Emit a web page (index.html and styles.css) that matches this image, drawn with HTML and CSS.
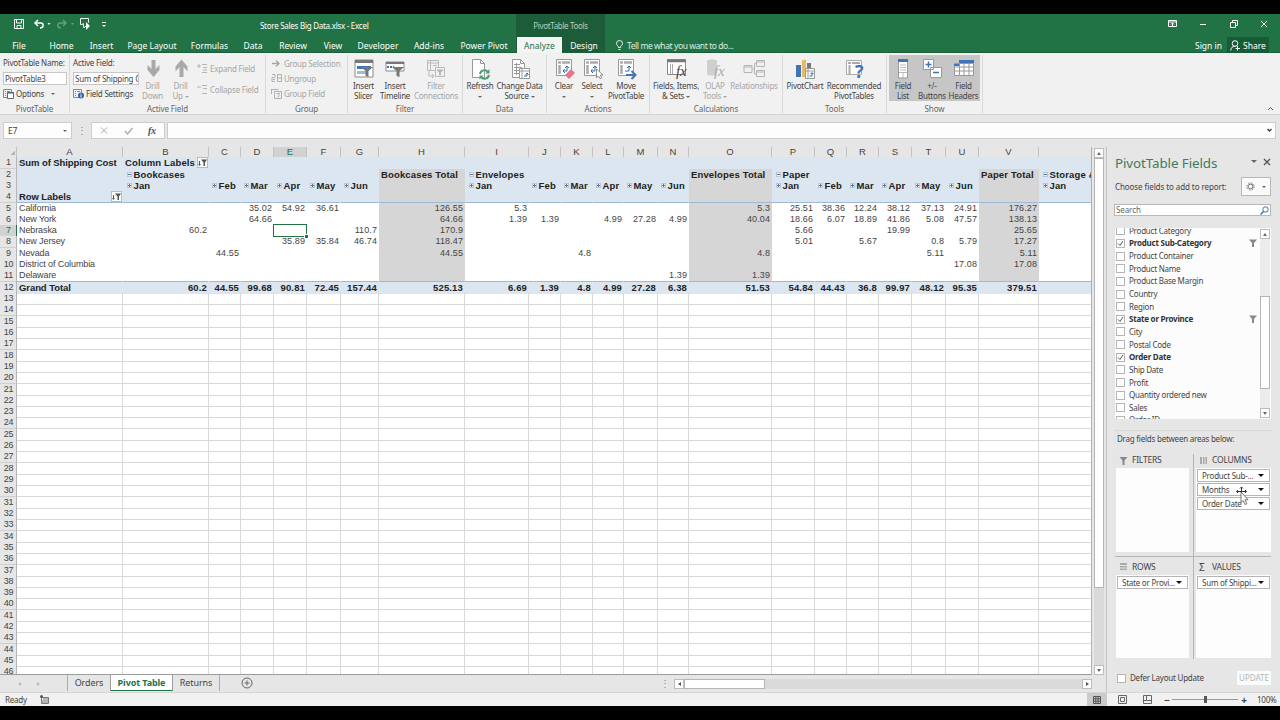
FILE: index.html
```html
<!DOCTYPE html>
<html lang="en">
<head>
    <meta charset="UTF-8">
    <meta name="viewport" content="width=device-width, initial-scale=1.0">
    <title>Store Sales Big Data.xlsx - Excel</title>
    <link rel="stylesheet" href="styles.css">
</head>
<body>
    <div class="window">
        <div class="top">
            <div class="titlebar">
                <div class="quick">
                    <svg width="70" height="14" viewBox="0 0 70 14" fill="none" stroke="#fff">
                        <path d="M4.500 2.500h9v9h-9zM6.500 2.500v3.500h5v-3.500M7 11.500v-3h4v3"/>
                        <path d="M25 6h6c3 0 3 5-1 5M28 3l-3 3 3 3" stroke-width="1.500"/>
                        <path d="M37.500 6h3l-1.500 2z" fill="#fff" stroke="none"/>
                        <g opacity=".3"><path d="M56 6h-6c-3 0-3 5 1 5M53 3l3 3-3 3" stroke-width="1.500"/><path d="M61 6h3l-1.500 2z" fill="#fff" stroke="none"/></g>
                    </svg>
                    <svg width="40" height="14" viewBox="0 0 40 14" fill="none" stroke="#fff">
                        <path d="M2.500 7.500h-2v-6h8v4"/><path d="M3 6l1 5 2-2"/><path d="M6 5l4 4-4 4z" fill="#fff" stroke="none"/>
                        <path d="M22 5.500h4"/><path d="M22 8h4l-2 2z" fill="#fff" stroke="none"/>
                    </svg>
                </div>
                <div class="doc-title">Store Sales Big Data.xlsx - Excel</div>
                <div class="context-title">PivotTable Tools</div>
                <div class="win-buttons">
                    <svg width="110" height="12" viewBox="0 0 110 12" fill="none" stroke="#fff">
                        <path d="M1.500 2.500h8v6h-8zM1.500 4h8M5.500 8v-3M4 6.500l1.500-1.500 1.500 1.500"/>
                        <path d="M33 6.500h6"/>
                        <path d="M63.500 4.500h5v5h-5zM65.500 4v-1.500h5v5h-2"/>
                        <path d="M94 3l6 6M100 3l-6 6"/>
                    </svg>
                </div>
            </div>
            <div class="tabs">
                <span class="tab file">File</span>
                <span class="tab home">Home</span>
                <span class="tab insert">Insert</span>
                <span class="tab page">Page Layout</span>
                <span class="tab formulas">Formulas</span>
                <span class="tab data">Data</span>
                <span class="tab review">Review</span>
                <span class="tab view">View</span>
                <span class="tab developer">Developer</span>
                <span class="tab addins">Add-ins</span>
                <span class="tab power">Power Pivot</span>
                <span class="tab analyze active">Analyze</span>
                <span class="tab design">Design</span>
                <span class="tell">
                    <svg width="7" height="11" viewBox="0 0 7 11" fill="none" stroke="#fff" stroke-width=".9"><path d="M2.500 7.500c0-2-2-2-2-4a3 3 0 0 1 6 0c0 2-2 2-2 4zM2.500 9.500h2"/></svg>
                    <span>Tell me what you want to do...</span>
                </span>
                <span class="signin">Sign in</span>
                <span class="share">
                    <svg width="11" height="11" viewBox="0 0 11 11" fill="none" stroke="#fff"><circle cx="5" cy="3.500" r="2.800"/><path d="M.8 10.500c0-3 2-4.200 4-4.200M7.500 6v4.500M5.500 8.500h4.500"/></svg>
                    <span>Share</span>
                </span>
            </div>
        </div>

        <div class="ribbon">
            <div class="group g-pivot">
                <div class="tools stack">
                    <span class="line">PivotTable Name:</span>
                    <span class="input">PivotTable3</span>
                    <span class="line">
                        <svg class="small-icon" viewBox="0 0 11 11" fill="none" stroke="#888"><path d="M.5 1.500h8v8h-8zM2 3.500h1M4 3.500h3M2 5.500h1M2 7.500h1"/><path d="M4.500 4.500h6v6h-6z" fill="#fff" stroke="#666"/><path d="M4.500 5h6" stroke="#2b67a5"/></svg>
                        Options <i class="caret"></i>
                    </span>
                </div>
                <div class="caption">PivotTable</div>
            </div>
            <div class="group g-field">
                <div class="tools">
                    <div class="stack field-stack">
                        <span class="line">Active Field:</span>
                        <span class="input">Sum of Shipping C</span>
                        <span class="line">
                            <svg class="small-icon" viewBox="0 0 11 11" fill="none" stroke="#888"><path d="M.5 1.500h8v8h-8zM2 3.500h1M4 3.500h3M2 5.500h1M2 7.500h1"/><circle cx="8" cy="7.500" r="3" fill="#2b67a5" stroke="none"/><path d="M8 5.500v1M8 7v2.500" stroke="#fff"/></svg>
                            Field Settings
                        </span>
                    </div>
                    <div class="big down off"><svg viewBox="0 0 20 20"><path d="M8.500 1h4v9l4-4v5l-6 7-6-7V6l4 4z" fill="#a9a9a9"/></svg><span>Drill</span><span>Down</span></div>
                    <div class="big up off"><svg viewBox="0 0 20 20"><path d="M8.500 18h4V8l4 4.500V7.500l-6-7-6 7v5l4-4.500z" fill="#a9a9a9"/></svg><span>Drill</span><span>Up <i class="caret"></i></span></div>
                    <div class="stack expand off">
                        <span class="line"><svg class="small-icon" viewBox="0 0 11 11" fill="none" stroke="#b5b5b5"><path d="M0 3h4M2 1v4M5 1.500h5M6 4.500h4M5 9.500h5M6 7h4"/></svg>Expand Field</span>
                        <span class="line"><svg class="small-icon" viewBox="0 0 11 11" fill="none" stroke="#b5b5b5"><path d="M0 3h4M5 1.500h5M6 4.500h4M5 9.500h5"/></svg>Collapse Field</span>
                    </div>
                </div>
                <div class="caption">Active Field</div>
            </div>
            <div class="group g-group">
                <div class="tools stack off">
                    <span class="line"><svg class="small-icon" viewBox="0 0 11 11" fill="none" stroke="#a5a5a5" stroke-width="1.300"><path d="M1 5.500h7M5 2.500l3 3-3 3"/></svg>Group Selection</span>
                    <span class="line"><svg class="small-icon" viewBox="0 0 11 11" fill="none" stroke="#b0b0b0"><path d="M1 1.500h3v3h-3v4h3M6.500 1.500h4v7h-4zM6.500 5h4M2 6.500h2"/></svg>Ungroup</span>
                    <span class="line"><svg class="small-icon" viewBox="0 0 11 11" fill="none" stroke="#b0b0b0"><path d="M.5 1.500h7M.5 1v5M3.500 3.500h7v7h-7zM5.500 5.500h3l-1.500 4"/></svg>Group Field</span>
                </div>
                <div class="caption">Group</div>
            </div>
            <div class="group g-filter">
                <div class="tools">
                    <div class="big slicer"><svg viewBox="0 0 20 20"><path d="M1 1h18v17H1z" fill="#fff" stroke="#8b8b8b"/><path d="M1 1h18v3H1z" fill="#787878"/><path d="M3 7h14v3H3z" fill="#3f74b6"/><path d="M3 12h9v3H3z" fill="#9eb9d9"/><path d="M7 8h12l-4.500 4v6l-3-1v-5z" fill="#777"/></svg><span>Insert</span><span>Slicer</span></div>
                    <div class="big timeline"><svg viewBox="0 0 20 20"><path d="M1 3h18v9H1z" fill="#fff" stroke="#8b8b8b"/><path d="M1 3h18v2H1z" fill="#787878"/><path d="M2 8h7" stroke="#3f74b6" stroke-width="2" stroke-dasharray="2 1"/><path d="M7 8h12l-4.500 4v6l-3-1v-5z" fill="#777"/></svg><span>Insert</span><span>Timeline</span></div>
                    <div class="big connections off"><svg viewBox="0 0 20 20" fill="none" stroke="#b9b9b9"><path d="M1.500 1.500h11v10h-11zM1.500 4h11M4.500 2v9M7 6.500h4"/><path d="M3 12v5h5M6 15l2 2-2 2"/><path d="M9.500 8.500h9v9h-9z" fill="#f1f1f1"/><path d="M11 11h6l-2.500 2v3h-1v-3z" fill="#aaa"/></svg><span>Filter</span><span>Connections</span></div>
                </div>
                <div class="caption">Filter</div>
            </div>
            <div class="group g-data">
                <div class="tools">
                    <div class="big refresh"><svg viewBox="0 0 20 20" fill="none"><path d="M2.500.5h8l4 4v14h-12z" fill="#fff" stroke="#999"/><path d="M10.500.5v4h4" stroke="#999"/><path d="M10 15a4.500 4.500 0 0 1 8-2M19 16a4.500 4.500 0 0 1-8 2" stroke="#4f9a75" stroke-width="2"/><path d="M19.500 10v4.500h-4zM9.500 20.500v-4h4z" fill="#4f9a75"/></svg><span>Refresh</span><span><i class="caret"></i></span></div>
                    <div class="big source"><svg viewBox="0 0 20 20" fill="none" stroke="#999"><path d="M2.500.5h8l4 4v14h-12z" fill="#fff"/><path d="M10.500.5v4h4M4 5.500h6M4 8.500h8M4 11.500h6M4 14.500h5M6.500 4v12"/><path d="M9.500 9.500h10v10h-10z" fill="#fff"/><path d="M9.500 12h10M12 9.500v10"/><path d="M14 17h3v-3M15.500 15.500l1.500-1.500 1.500 1.500" stroke="#2f6cb3"/></svg><span>Change Data</span><span>Source <i class="caret"></i></span></div>
                </div>
                <div class="caption">Data</div>
            </div>
            <div class="group g-actions">
                <div class="tools">
                    <div class="big clear"><svg viewBox="0 0 20 20" fill="none" stroke="#999"><path d="M2.500.5h15v16h-15z" fill="#fff"/><path d="M4 3.500h3M8 3.500h8M5.500 6v9" stroke="#aaa" stroke-width="2.500"/><path d="M9 12h4V7M11 9l2-2 2 2M10.500 10L9 12l2 2" stroke="#2f6cb3"/><path d="M17 10l4 4-6 6-4-4z" fill="#e57589" stroke="none"/></svg><span>Clear</span><span><i class="caret"></i></span></div>
                    <div class="big select"><svg viewBox="0 0 20 20" fill="none" stroke="#999"><path d="M2.500.5h15v16h-15z" fill="#fff"/><path d="M4 3.500h3M8 3.500h8M5.500 6v9" stroke="#aaa" stroke-width="2.500"/><path d="M9 12h4V7M11 9l2-2 2 2M10.500 10L9 12l2 2" stroke="#2f6cb3"/><path d="M14.500 10v9l2-2 2 3 1-1-1-3h2.500z" fill="#fff" stroke="#777" stroke-width=".8"/></svg><span>Select</span><span><i class="caret"></i></span></div>
                    <div class="big move"><svg viewBox="0 0 20 20" fill="none" stroke="#999"><path d="M2.500.5h15v16h-15z" fill="#fff"/><path d="M4 3.500h3M8 3.500h8M5.500 6v9" stroke="#aaa" stroke-width="2.500"/><path d="M9 12h4V7M11 9l2-2 2 2" stroke="#2f6cb3"/><path d="M10 16h9M15.500 12l4 4-4 4" stroke="#3f74b6" stroke-width="2"/></svg><span>Move</span><span>PivotTable</span></div>
                </div>
                <div class="caption">Actions</div>
            </div>
            <div class="group g-calc">
                <div class="tools">
                    <div class="big fields"><svg viewBox="0 0 20 20"><path d="M1.500.5h18v15h-18z" fill="#fff" stroke="#888"/><path d="M1 2h19" stroke="#777" stroke-width="2.500"/><path d="M4.500 5v10M6.500 5v10" stroke="#aaa"/><text x="10" y="17" class="fx">fx</text></svg><span>Fields, Items,</span><span>&amp; Sets <i class="caret"></i></span></div>
                    <div class="big olap off"><svg viewBox="0 0 20 20"><path d="M2 2c0-2 10-2 10 0v13c0 2-10 2-10 0z" fill="#cfcfcf"/><text x="9" y="17" class="fx">fx</text></svg><span>OLAP</span><span>Tools <i class="caret"></i></span></div>
                    <div class="big relations off"><svg viewBox="0 0 20 20" fill="none" stroke="#b5b5b5"><path d="M0 6.500h8v7H0zM12.500 1.500h8v6h-8zM12.500 11.500h8v6h-8zM8 10h2.500V4.500H12M10.500 10v5H12M0 8h8M12 3h8M12 13h8"/></svg><span>Relationships</span></div>
                </div>
                <div class="caption">Calculations</div>
            </div>
            <div class="group g-tools">
                <div class="tools">
                    <div class="big chart"><svg viewBox="0 0 20 20"><path d="M1 6h5v12H1z" fill="#3f74b6"/><path d="M7 1h4v17H7z" fill="#e9b862"/><path d="M12 4h4v6h-4z" fill="#777"/><path d="M10.500 9.500h9v10h-9zM10.500 12h9M13 9.500v10" fill="#fff" stroke="#999"/><path d="M14.500 17h2.500v-3M15.500 15l1.500-1.500 1.500 1.500" fill="none" stroke="#2f6cb3"/></svg><span>PivotChart</span></div>
                    <div class="big recommended"><svg viewBox="0 0 20 20"><path d="M2.500 1.500h15v14h-15z" fill="#fff" stroke="#aaa"/><path d="M4 4h3M8 4h8M5.500 6v9" stroke="#aaa" stroke-width="2"/><text x="11" y="19" class="question">?</text></svg><span>Recommended</span><span>PivotTables</span></div>
                </div>
                <div class="caption">Tools</div>
            </div>
            <div class="group g-show">
                <div class="tools">
                    <div class="big list on"><svg viewBox="0 0 20 20"><path d="M5.500 1h9v18h-9z" fill="#fff" stroke="#999"/><path d="M5 0h10v3H5z" fill="#3f74b6"/><path d="M7 6h6M7 8.500h6M7 11h6M6 13.500h8M10 14v5" stroke="#bbb"/></svg><span>Field</span><span>List</span></div>
                    <div class="big buttons on"><svg viewBox="0 0 20 20"><path d="M1.500.5h10v10h-10zM8.500 8.500h11v10h-11z" fill="#fff" stroke="#999"/><path d="M3.500 5.500h6M6.500 2.500v6M11 13.500h6" stroke="#3f74b6" stroke-width="1.500"/></svg><span>+/-</span><span>Buttons</span></div>
                    <div class="big headers on"><svg viewBox="0 0 20 20"><path d="M.5 4.500h19v12H.5z" fill="#fff"/><path d="M.5 4.500h19v12H.5zM.5 8h19M.5 12h19M5.500 4v12M10 4v12M15 4v12" fill="none" stroke="#999"/><path d="M5 1h15v3H5zM0 5h5v2H0z" fill="#3f74b6"/></svg><span>Field</span><span>Headers</span></div>
                </div>
                <div class="caption">Show</div>
            </div>
            <svg class="collapse" width="7" height="5" viewBox="0 0 7 5" fill="none" stroke="#555"><path d="M1 4l2.500-2.500L6 4"/></svg>
        </div>

        <div class="formula-bar">
            <div class="name-box">E7 <i class="caret"></i></div>
            <span class="dots">⋮</span>
            <div class="fx-box">
                <svg width="73" height="15" viewBox="0 0 73 15" fill="none" stroke="#aaa"><path d="M9 4.500l6 6M15 4.500l-6 6"/><path d="M33 8l2.500 3 5-6" stroke-width="1.300"/><text x="56" y="11" class="fx-small">fx</text></svg>
            </div>
            <div class="formula-input"><svg width="7" height="5" viewBox="0 0 7 5" fill="none" stroke="#444" stroke-width="1.500"><path d="M1.500 1l2 2 2-2"/></svg></div>
        </div>

        <div class="workspace">
            <div class="book">
                <div class="sheet-area">
                    <div class="sheet" id="sheet"></div>
                    <div class="vscroll">
                        <span class="arrow"><i class="tri tri-up"></i></span>
                        <span class="thumb"></span>
                        <span class="arrow end"><i class="tri tri-down"></i></span>
                    </div>
                </div>
                <div class="sheet-tabs">
                    <span class="nav"><i class="tri tri-left"></i><i class="tri tri-right"></i></span>
                    <span class="sheet-tab orders">Orders</span>
                    <span class="sheet-tab pivot">Pivot Table</span>
                    <span class="sheet-tab returns">Returns</span>
                    <svg class="add" width="12" height="12" viewBox="0 0 12 12" fill="none" stroke="#666"><circle cx="6" cy="6" r="5"/><path d="M6 3.500v5M3.500 6h5"/></svg>
                    <span class="dots split">⋮</span>
                    <div class="hscroll">
                        <span class="arrow"><i class="tri tri-left"></i></span>
                        <span class="thumb"></span>
                        <span class="arrow end"><i class="tri tri-right"></i></span>
                    </div>
                </div>
            </div>

            <div class="pane">
                <div class="pane-head">
                    <h2>PivotTable Fields</h2>
                    <i class="caret"></i>
                    <svg width="8" height="8" viewBox="0 0 8 8" stroke="#555" stroke-width="1.400"><path d="M1 1l6 6M7 1L1 7"/></svg>
                </div>
                <div class="choose">
                    <span>Choose fields to add to report:</span>
                    <span class="gear"><svg width="9" height="9" viewBox="0 0 9 9" fill="none" stroke="#888"><circle cx="4.500" cy="4.500" r="2.400" stroke-width="1.200"/><circle cx="4.500" cy="4.500" r="3.700" stroke-dasharray="1.500 1.400"/></svg><i class="caret"></i></span>
                </div>
                <div class="search">
                    <span>Search</span>
                    <svg width="9" height="9" viewBox="0 0 9 9" fill="none" stroke="#3b6ea5"><circle cx="5.500" cy="3.500" r="2.700"/><path d="M3.500 5.500l-3 3" stroke-width="1.500"/></svg>
                </div>
                <div class="fields-box">
                    <div class="field-list" id="fields"></div>
                    <div class="list-scroll">
                        <span class="arrow"><i class="tri tri-up"></i></span>
                        <span class="thumb"></span>
                        <span class="arrow end"><i class="tri tri-down"></i></span>
                    </div>
                </div>
                <div class="drag-text">Drag fields between areas below:</div>
                <div class="areas">
                    <div class="area">
                        <div class="area-title"><svg width="9" height="9" viewBox="0 0 9 9"><path d="M.5 1h8l-3 3.500V9h-2V4.500z" fill="#888"/></svg>FILTERS</div>
                        <div class="drop"></div>
                    </div>
                    <div class="area right">
                        <div class="area-title"><svg width="9" height="9" viewBox="0 0 9 9"><path d="M1 1h2v7H1zM4 1h1.500v7H4zM6.500 1H8v7H6.500z" fill="#aaa"/></svg>COLUMNS</div>
                        <div class="drop">
                            <span class="chip">Product Sub-...<i class="caret"></i></span>
                            <span class="chip">Months<i class="caret"></i></span>
                            <span class="chip">Order Date<i class="caret"></i></span>
                            <svg class="cursor" width="16" height="20" viewBox="0 0 16 20"><path d="M6.500 1v10M1.500 5.500h10M5 2.500L6.500 1 8 2.500M3 4L1.500 5.500 3 7M10 4l1.500 1.500L10 7" fill="none" stroke="#333"/><path d="M6 6v10.500l2.300-2 1.700 4 1.800-.8-1.700-3.900h3z" fill="#fff" stroke="#555" stroke-width=".8"/></svg>
                        </div>
                    </div>
                    <div class="area lower">
                        <div class="area-title"><svg width="9" height="9" viewBox="0 0 9 9"><path d="M1 1h7v2H1zM1 4h7v1.500H1zM1 6.500h7V8H1z" fill="#aaa"/></svg>ROWS</div>
                        <div class="drop"><span class="chip">State or Provi...<i class="caret"></i></span></div>
                    </div>
                    <div class="area right lower">
                        <div class="area-title"><span class="sigma">Σ</span>VALUES</div>
                        <div class="drop"><span class="chip">Sum of Shippi...<i class="caret"></i></span></div>
                    </div>
                </div>
                <div class="defer">
                    <i class="check"></i><span>Defer Layout Update</span><span class="update">UPDATE</span>
                </div>
            </div>
        </div>

        <div class="status">
            <span>Ready</span>
            <svg class="macro" width="9" height="9" viewBox="0 0 9 9" fill="none" stroke="#777"><path d="M1.500 2.500h7v6h-7zM3 5v3M5 5v3M7 5v3M3 4h5"/><circle cx="1.500" cy="1.500" r="1.500" fill="#555" stroke="none"/></svg>
            <div class="views">
                <span class="view-btn current"><svg width="9" height="9" viewBox="0 0 9 9" fill="none" stroke="#555"><path d="M1.500 1.500h7v7h-7zM1.500 3.800h7M1.500 6.200h7M3.800 1.500v7M6.200 1.500v7"/></svg></span>
                <span class="view-btn"><svg width="9" height="9" viewBox="0 0 9 9" fill="none" stroke="#666"><path d="M.5.5h8v8h-8zM2.500 2.500h4v4h-4z"/></svg></span>
                <span class="view-btn"><svg width="9" height="9" viewBox="0 0 9 9" fill="none" stroke="#666"><path d="M.5.5h8v8h-8zM3.500.5v5h5M.5 5.500h3"/></svg></span>
                <span class="zoom-sign">−</span>
                <span class="slider"><i></i></span>
                <span class="zoom-sign">+</span>
                <span class="percent">100%</span>
            </div>
        </div>
    </div>

    <script src="script.js"></script>
</body>
</html>
```
FILE: script.js
```js
const columns = 'ABCDEFGHIJKLMNOPQRSTUV'.split('').concat('');
const rowCount = 46;
const totals = ['H', 'O', 'V'];

// "+" and "-" in front of a label draw the expand / collapse button
const cells = {
    A1: 'Sum of Shipping Cost', B1: 'Column Labels',
    B2: '-Bookcases', H2: 'Bookcases Total', I2: '-Envelopes', O2: 'Envelopes Total', P2: '-Paper', V2: 'Paper Total', W2: '-Storage & Organization',
    B3: '+Jan', C3: '+Feb', D3: '+Mar', E3: '+Apr', F3: '+May', G3: '+Jun',
    I3: '+Jan', J3: '+Feb', K3: '+Mar', L3: '+Apr', M3: '+May', N3: '+Jun',
    P3: '+Jan', Q3: '+Feb', R3: '+Mar', S3: '+Apr', T3: '+May', U3: '+Jun', W3: '+Jan',
    A4: 'Row Labels',
    A5: 'California', D5: 35.02, E5: 54.92, F5: 36.61, H5: 126.55, I5: 5.3, O5: 5.3,
    P5: 25.51, Q5: 38.36, R5: 12.24, S5: 38.12, T5: 37.13, U5: 24.91, V5: 176.27,
    A6: 'New York', D6: 64.66, H6: 64.66, I6: 1.39, J6: 1.39, L6: 4.99, M6: 27.28, N6: 4.99, O6: 40.04,
    P6: 18.66, Q6: 6.07, R6: 18.89, S6: 41.86, T6: 5.08, U6: 47.57, V6: 138.13,
    A7: 'Nebraska', B7: 60.2, G7: 110.7, H7: 170.9, P7: 5.66, S7: 19.99, V7: 25.65,
    A8: 'New Jersey', E8: 35.89, F8: 35.84, G8: 46.74, H8: 118.47, P8: 5.01, R8: 5.67, T8: 0.8, U8: 5.79, V8: 17.27,
    A9: 'Nevada', C9: 44.55, H9: 44.55, K9: 4.8, O9: 4.8, T9: 5.11, V9: 5.11,
    A10: 'District of Columbia', U10: 17.08, V10: 17.08,
    A11: 'Delaware', N11: 1.39, O11: 1.39,
    A12: 'Grand Total', B12: 60.2, C12: 44.55, D12: 99.68, E12: 90.81, F12: 72.45, G12: 157.44, H12: 525.13,
    I12: 6.69, J12: 1.39, K12: 4.8, L12: 4.99, M12: 27.28, N12: 6.38, O12: 51.53,
    P12: 54.84, Q12: 44.43, R12: 36.8, S12: 99.97, T12: 48.12, U12: 95.35, V12: 379.51
};

const sheet = document.getElementById('sheet');

function add(parent, className, text) {
    const el = document.createElement('div');
    el.className = className;
    if (text !== undefined) el.textContent = text;
    parent.appendChild(el);
    return el;
}

const head = add(sheet, 'row head');
add(head, 'corner');
columns.forEach(c => add(head, c === 'E' ? 'col current' : 'col', c));

for (let r = 1; r <= rowCount; r++) {
    let rowClass = 'row';
    if (r <= 4 || r === 12) rowClass += ' blue';
    if (r <= 12) rowClass += ' plain';
    if (r === 4) rowClass += ' last-head';
    if (r === 11) rowClass += ' last-body';
    const row = add(sheet, rowClass);
    add(row, r === 7 ? 'num current' : 'num', r);

    columns.forEach(c => {
        const value = cells[(c || 'W') + r];
        const cell = add(row, c === 'A' ? 'cell first' : 'cell');
        if (totals.includes(c) && r > 1 && r < 12) cell.classList.add('total');
        if (c === 'E' && r === 7) cell.classList.add('selected');
        if (typeof value === 'number') cell.classList.add('number');
        if (value === undefined) return;
        const label = String(value);
        if (label[0] === '+' || label[0] === '-') {
            const toggle = document.createElement('i');
            toggle.className = label[0] === '+' ? 'toggle plus' : 'toggle';
            cell.appendChild(toggle);
            cell.classList.add(c === 'B' || c === 'I' || c === 'P' || c === '' ? 'outer' : 'month');
            cell.append(label.slice(1));
        } else {
            cell.append(label);
        }
        if (label === 'Column Labels' || label === 'Row Labels') {
            const button = add(cell, 'filter-btn');
            button.innerHTML = '<svg width="9" height="9" viewBox="0 0 9 9"><path d="M3 1.500h6L7 4.500V8H5.500V4.500zM1 3h1v3h1L1.500 8 0 6h1z" fill="#555"/></svg>';
        }
    });
}

const fields = [
    'Product Category', '*Product Sub-Category', 'Product Container', 'Product Name', 'Product Base Margin',
    'Country', 'Region', '*State or Province', 'City', 'Postal Code', '*Order Date', 'Ship Date',
    'Profit', 'Quantity ordered new', 'Sales', 'Order ID'
];
const list = document.getElementById('fields');
const tick = '<svg width="7" height="7" viewBox="0 0 7 7" fill="none" stroke="#555"><path d="M1 3.500l2 2L6 1"/></svg>';
const funnel = '<svg class="funnel" width="8" height="8" viewBox="0 0 8 8"><path d="M0 .5h8L5 4v4H3V4z" fill="#888"/></svg>';

fields.forEach(name => {
    const used = name[0] === '*';
    const row = add(list, used ? 'field used' : 'field');
    const box = add(row, 'check');
    if (used) box.innerHTML = tick;
    row.append(name.replace('*', ''));
    if (used && name !== '*Order Date') row.insertAdjacentHTML('beforeend', funnel);
});
```
FILE: styles.css
```css
* {
    box-sizing: border-box;
}

body {
    margin: 0;
    background: #000;
    font-family: "Noto Sans", "Open Sans", sans-serif;
    font-size: 8px;
    line-height: 10px;
    letter-spacing: -0.23px;
    color: #444;
}

svg {
    flex: none;
}

.window {
    width: 1280px;
    height: 720px;
    padding: 14px 0;
    display: flex;
    flex-direction: column;
    overflow: hidden;
    white-space: nowrap;
}

.caret {
    display: inline-block;
    border: 2px solid transparent;
    border-top: 2.5px solid #666;
    border-bottom: 0;
    vertical-align: middle;
}

/* Title bar and tabs */
.top {
    height: 39px;
    background: linear-gradient(90deg, transparent 516px, #1c5c38 516px, #1c5c38 605px, transparent 605px) #217346;
    color: #fff;
    border-bottom: 1px solid #1b5e39;
}

.titlebar {
    height: 23px;
    display: flex;
}

.quick {
    width: 240px;
    display: flex;
    padding: 3px 0 0 10px;
}

.doc-title {
    width: 150px;
    padding-left: 20px;
    line-height: 24px;
    letter-spacing: -0.27px;
}

.context-title {
    margin-left: 126px;
    width: 89px;
    text-align: center;
    line-height: 24px;
    letter-spacing: -0.35px;
    color: #b5d0c0;
}

.win-buttons {
    margin-left: auto;
    width: 113px;
    padding-top: 4px;
}

.tabs {
    height: 16px;
    display: flex;
    line-height: 17px;
    font-size: 8.5px;
    letter-spacing: 0;
}

.tab {
    display: flex;
    justify-content: center;
    flex: none;
}

.file { width: 38px; }
.home { width: 47px; }
.insert { width: 33px; }
.page { width: 68px; }
.formulas { width: 47px; }
.data, .review, .view { width: 40px; }
.developer { width: 50px; }
.addins { width: 52px; }
.power { width: 58px; }
.analyze { width: 45px; margin-left: 4px; }
.design { width: 44px; }

.tab.active {
    background: #f4f4f4;
    color: #217346;
}

.tell {
    display: flex;
    align-items: center;
    gap: 4px;
    margin-left: 10px;
    letter-spacing: -0.42px;
    color: #dcebe2;
}

.signin {
    margin-left: auto;
    margin-right: 5px;
}

.share {
    width: 42px;
    margin-right: 11px;
    display: flex;
    align-items: center;
    justify-content: center;
    gap: 2px;
    background: #185c37;
}

/* Ribbon */
.ribbon {
    height: 62px;
    display: flex;
    background: #f1f1f1;
    border-bottom: 1px solid #d2d2d2;
}

.group {
    flex: none;
    display: flex;
    flex-direction: column;
    border-right: 1px solid #dadada;
    margin: 2px 0;
    height: 58px;
}

.g-pivot { width: 70px; }
.g-field { width: 196px; }
.g-group { width: 82px; }
.g-filter { width: 115px; }
.g-data { width: 84px; }
.g-actions { width: 103px; }
.g-calc { width: 133px; }
.g-tools { width: 104px; }
.g-show { width: 96px; }

.tools {
    height: 46px;
    display: flex;
}

.caption {
    text-align: center;
    line-height: 16px;
    letter-spacing: -0.1px;
    color: #666;
}

.stack {
    display: flex;
    flex-direction: column;
    padding: 1px 0 0 3px;
}

.line {
    height: 15px;
    display: flex;
    align-items: center;
}

.small-icon {
    width: 11px;
    height: 11px;
    margin-right: 2px;
}

.line .caret {
    margin-left: 7px;
}

.input {
    width: 64px;
    height: 14px;
    margin: 1px 0;
    padding-left: 1px;
    background: #fff;
    border: 1px solid #c6c6c6;
    line-height: 12px;
    overflow: hidden;
}

.field-stack {
    width: 68px;
}

.field-stack .input {
    width: 66px;
}

.off {
    color: #a6a6a6;
}

.expand {
    padding-top: 6px;
    gap: 6px;
}

.g-group .tools {
    padding-left: 5px;
}

.big {
    flex: none;
    display: flex;
    flex-direction: column;
    align-items: center;
    padding-top: 4px;
}

.big svg {
    width: 20px;
    height: 20px;
    overflow: visible;
    margin-bottom: 2px;
}

.big span {
    height: 10.5px;
    line-height: 10px;
}

.big.off .caret {
    border-top-color: #a6a6a6;
}

.fx {
    font: italic 15px "Liberation Serif", serif;
    fill: #444;
    stroke: none;
}

.off .fx {
    fill: #aaa;
}

.question {
    font: bold 18px "Open Sans", sans-serif;
    fill: #3f74b6;
}

.down { width: 29px; }
.up { width: 27px; }
.slicer { width: 31px; }
.timeline { width: 32px; }
.connections { width: 50px; }
.refresh { width: 34px; }
.source { width: 45px; }
.clear { width: 28px; margin-left: 3px; }
.select { width: 28px; }
.move { width: 40px; }
.fields { width: 42px; margin-left: 5px; }
.olap { width: 36px; }
.relations { width: 42px; }
.chart { width: 40px; margin-left: 2px; }
.recommended { width: 58px; }
.list { width: 28px; margin-left: 2px; }
.buttons { width: 30px; }
.headers { width: 33px; }

.big.on {
    background: #c6c6c6;
}

.collapse {
    margin: auto 6px 3px auto;
}

/* Formula bar */
.formula-bar {
    height: 32px;
    padding: 7px 4px 0 3px;
    display: flex;
    background: #e6e6e6;
}

.name-box, .fx-box, .formula-input {
    height: 17px;
    background: #fdfdfd;
    border: 1px solid #cdcdcd;
}

.name-box {
    width: 69px;
    padding: 0 4px;
    display: flex;
    justify-content: space-between;
    align-items: center;
    font-size: 8.5px;
}

.dots {
    width: 19px;
    text-align: center;
    line-height: 17px;
    color: #888;
    font-size: 10px;
}

.fx-box {
    width: 74px;
    margin-right: 2px;
}

.fx-small {
    font: italic bold 10px "Liberation Serif", serif;
    fill: #555;
    stroke: none;
}

.formula-input {
    flex: 1;
    display: flex;
    align-items: center;
    justify-content: flex-end;
    padding-right: 2px;
}

/* Sheet */
.workspace {
    height: 545px;
    display: flex;
    background: #e6e6e6;
}

.book {
    width: 1106px;
    display: flex;
    flex-direction: column;
}

.sheet-area {
    height: 528px;
    display: flex;
}

.sheet {
    width: 1092px;
    height: 528px;
    overflow: hidden;
    border-right: 1px solid #b0b0b0;
    border-bottom: 1px solid #9c9c9c;
    background: #fff;
    font-family: "Liberation Sans", Arial, sans-serif;
    font-size: 9px;
    letter-spacing: 0.1px;
}

.row {
    display: grid;
    grid-template-columns: 17px 106px 86px 32px 33px 33px 34px 38px 86px 64px 32px 32px 31px 34px 31px 83px 43px 32px 32px 33px 34px 33px 60px 53px;
    height: 11.32px;
    line-height: 11px;
}

.head {
    height: 10.3px;
    background: #e6e6e6;
    font-size: 9.5px;
    line-height: 10px;
}

.col, .corner {
    text-align: center;
    border-right: 1px solid #c3c3c3;
    border-bottom: 1px solid #b0b8c4;
}

.corner {
    background: linear-gradient(135deg, transparent 50%, #b4b4b4 50%) 10px 3px / 5px 5px no-repeat;
}

.col.current {
    background: #d2d2d2;
    color: #217346;
    border-bottom: 1px solid #217346;
}

.num {
    background: #e6e6e6;
    border-right: 1px solid #b5b5b5;
    border-bottom: 1px solid #cfcfcf;
    padding-left: 1px;
    text-align: center;
    font-size: 9px;
    letter-spacing: -0.2px;
}

.num.current {
    background: #d2d2d2;
    color: #217346;
    border-right: 1px solid #217346;
}

.cell {
    position: relative;
    border-right: 1px solid #d8d8d8;
    border-bottom: 1px solid #d8d8d8;
    padding-left: 2px;
    min-width: 0;
}

.first {
    letter-spacing: -0.1px;
}

.plain .cell {
    border-color: transparent;
}

.blue .cell {
    background: #dce6f1;
    font-weight: bold;
    font-size: 9.5px;
    color: #222;
    letter-spacing: 0.15px;
}

.blue .first {
    letter-spacing: -0.08px;
}

.blue .total, .plain .total {
    background: #d6d6d6;
}

.last-head .cell, .last-body .cell {
    border-bottom-color: #9fb8d8;
}

.number {
    text-align: right;
    padding: 0 1px 0 0;
}

.row .selected {
    border: 1.5px solid #217346;
    margin: -1px 0 0 -1px;
    z-index: 1;
}

.selected::after {
    content: "";
    position: absolute;
    right: -2px;
    bottom: -2px;
    width: 3px;
    height: 3px;
    background: #217346;
    border: 1px solid #fff;
    box-sizing: content-box;
    border-right: 0;
    border-bottom: 0;
}

.outer {
    padding-left: 4px;
}

.month {
    padding-left: 3px;
}

.toggle {
    display: inline-block;
    width: 5px;
    height: 5px;
    margin-right: 1.5px;
    vertical-align: 1px;
    border: 1px solid #b9c6da;
    background: linear-gradient(#5b7497, #5b7497) center / 3px 1px no-repeat, #eef3fa;
}

.toggle.plus {
    background: linear-gradient(#5b7497, #5b7497) center / 3px 1px no-repeat, linear-gradient(#5b7497, #5b7497) center / 1px 3px no-repeat, #eef3fa;
}

.filter-btn {
    position: absolute;
    right: 0;
    top: 0;
    width: 11px;
    height: 11px;
    display: flex;
    align-items: center;
    justify-content: center;
    background: #fbfbfb;
    border: 1px solid #b5bcc8;
}

/* Scroll bars */
.vscroll, .list-scroll {
    display: flex;
    flex-direction: column;
    background: #dadada;
}

.vscroll {
    width: 10px;
    margin: 1px 0 0 2px;
}

.arrow {
    flex: none;
    width: 10px;
    height: 10px;
    display: flex;
    align-items: center;
    justify-content: center;
    background: #fff;
    border: 1px solid #bdbdbd;
}

.end {
    margin-top: auto;
}

.thumb {
    background: #fff;
    border: 1px solid #b5b5b5;
}

.vscroll .thumb {
    height: 430px;
}

.tri {
    border: 2px solid transparent;
}

.tri-up { border-bottom: 3px solid #666; border-top: 0; }
.tri-down { border-top: 3px solid #666; border-bottom: 0; }
.tri-left { border-right: 3px solid #555; border-left: 0; }
.tri-right { border-left: 3px solid #555; border-right: 0; }

/* Sheet tabs */
.sheet-tabs {
    height: 17px;
    display: flex;
    line-height: 16px;
    font-size: 9px;
    letter-spacing: -0.1px;
}

.nav {
    width: 67px;
    padding-left: 18px;
    display: flex;
    align-items: center;
    gap: 16px;
    opacity: .3;
}

.sheet-tab {
    display: flex;
    justify-content: center;
    height: 16px;
}

.orders {
    width: 43px;
    border-left: 1px solid #aaa;
}

.pivot {
    width: 63px;
    background: #fff;
    color: #217346;
    font-weight: bold;
    border: 1px solid #9c9c9c;
    border-top: 0;
    border-bottom: 1.5px solid #217346;
}

.returns {
    width: 47px;
    border-right: 1px solid #aaa;
}

.add {
    margin: 2px 0 0 21px;
}

.split {
    margin-left: 402px;
}

.hscroll {
    width: 418px;
    height: 10px;
    margin-top: 4px;
    display: flex;
    background: #dadada;
}

.hscroll .thumb {
    width: 81px;
}

.hscroll .end {
    margin: 0 0 0 auto;
}

/* Fields pane */
.pane {
    width: 174px;
    border-left: 1px solid #c3c3c3;
    padding: 8px 9px 0 8px;
}

.pane-head {
    display: flex;
    align-items: center;
    height: 17px;
}

.pane h2 {
    margin: 0 auto 0 0;
    font-size: 13.4px;
    font-weight: normal;
    line-height: 17px;
    letter-spacing: -0.1px;
    color: #3c7d5c;
}

.pane-head svg {
    margin: -4px 0 0 6px;
}

.pane-head .caret {
    margin-top: -4px;
    border-width: 3px 3px 0;
}

.choose {
    display: flex;
    justify-content: space-between;
    align-items: center;
    height: 19px;
    margin-top: 5px;
    letter-spacing: -0.08px;
}

.gear {
    width: 30px;
    height: 19px;
    display: flex;
    align-items: center;
    justify-content: center;
    gap: 7px;
    background: #fafafa;
    border: 1px solid #b8b8b8;
}

.search {
    height: 12px;
    margin: 8px 0 12px -1px;
    padding: 0 1px;
    display: flex;
    align-items: center;
    justify-content: space-between;
    background: #fff;
    border: 1px solid #b8b8b8;
    color: #666;
    letter-spacing: -0.1px;
}

.fields-box {
    height: 191px;
    display: flex;
    background: #fcfcfc;
    overflow: hidden;
}

.field-list {
    width: 145px;
    margin-top: -3.5px;
}

.field {
    height: 12.65px;
    padding-left: 1px;
    display: flex;
    align-items: center;
}

.field.used {
    font-weight: bold;
    color: #333;
}

.check {
    flex: none;
    width: 9px;
    height: 9px;
    margin-right: 4px;
    display: flex;
    background: #fff;
    border: 1px solid #b5b5b5;
}

.funnel {
    margin: 0 3px 0 auto;
}

.list-scroll {
    width: 10px;
    height: 189px;
    margin-top: 1px;
    background: #ececec;
}

.list-scroll .thumb {
    height: 93px;
    margin-top: 57px;
}

.drag-text {
    height: 24px;
    margin-top: 11px;
    padding: 2px 0 0 2px;
    border-top: 1px dotted #ccc;
    line-height: 12px;
}

.areas {
    display: grid;
    grid-template-columns: 78px 78px;
    grid-template-rows: 102px 103px;
}

.area {
    padding: 1px 4px 0 1px;
}

.area.right {
    border-left: 1px solid #b5b5b5;
    padding: 1px 0 0 2px;
}

.area.lower {
    border-top: 1px solid #b5b5b5;
}

.area-title {
    display: flex;
    align-items: center;
    gap: 4px;
    height: 13px;
    padding: 0 0 3px 3px;
    font-size: 8.5px;
}

.area.lower .area-title {
    height: 17px;
    padding-bottom: 0;
}

.sigma {
    width: 9px;
    font-size: 10px;
}

.drop {
    position: relative;
    height: 84px;
    padding: 1px 1px 0;
    background: #fdfdfd;
}

.area.lower .drop {
    height: 83px;
}

.chip {
    display: flex;
    justify-content: space-between;
    align-items: center;
    height: 13px;
    margin-bottom: 1px;
    padding: 0 5px 0 4px;
    border: 1px solid #b5b5b5;
    background: #fff;
}

.chip .caret {
    border-width: 3px 3px 0;
    border-top-color: #111;
}

.cursor {
    position: absolute;
    left: 39px;
    top: 18px;
}

.defer {
    display: flex;
    align-items: center;
    height: 14px;
    margin: 12px 0 0 2px;
}

.update {
    width: 34px;
    height: 14px;
    margin-left: auto;
    background: #fbfbfb;
    text-align: center;
    line-height: 14px;
    letter-spacing: 0;
    color: #b5b5b5;
}

/* Status bar */
.status {
    height: 14px;
    display: flex;
    align-items: center;
    background: #f1f1f1;
    border-top: 1px solid #d5d5d5;
    padding-left: 5px;
}

.macro {
    margin-left: 13px;
}

.views {
    margin-left: auto;
    height: 13px;
    display: flex;
    align-items: center;
}

.view-btn {
    width: 20px;
    height: 13px;
    margin-right: 5.5px;
    display: flex;
    align-items: center;
    justify-content: center;
}

.view-btn.current {
    background: #cbcbcb;
}

.zoom-sign {
    width: 8px;
    text-align: center;
    font-size: 10px;
    font-weight: bold;
}

.slider {
    width: 66px;
    height: 7px;
    margin: 0 2px 0 1px;
    display: flex;
    justify-content: center;
    background: linear-gradient(#999, #999) center / 100% 1px no-repeat;
}

.slider i {
    width: 3px;
    background: #555;
}

.percent {
    width: 32px;
    padding-left: 9px;
}
```
